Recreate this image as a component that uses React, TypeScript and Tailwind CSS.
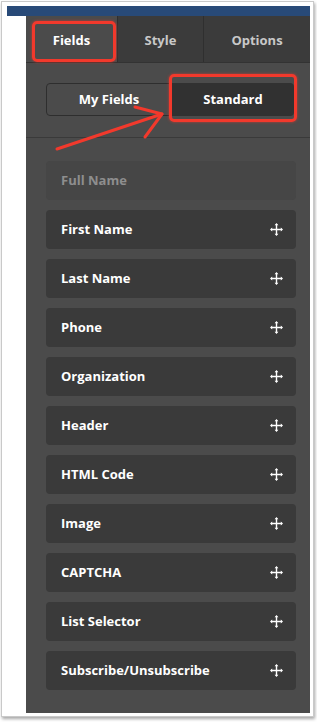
import React from "react";

const fields = [
  "First Name",
  "Last Name",
  "Phone",
  "Organization",
  "Header",
  "HTML Code",
  "Image",
  "CAPTCHA",
  "List Selector",
  "Subscribe/Unsubscribe",
];

function MoveIcon() {
  return (
    <svg width="13" height="13" viewBox="0 0 13 13" fill="none" className="text-white">
      <path d="M6.5 1v11M1 6.5h11" stroke="currentColor" strokeWidth="1.4" />
      <path d="M6.5 0L4.6 2.2h3.8zM6.5 13l-1.9-2.2h3.8zM0 6.5l2.2-1.9v3.8zM13 6.5l-2.2-1.9v3.8z" fill="currentColor" />
    </svg>
  );
}

export default function App() {
  return (
    <div className="w-[317px] h-[722px] bg-white" style={{ fontFamily: "'Open Sans', 'Liberation Sans', sans-serif" }}>
      <div className="relative ml-px mt-px w-[313px] h-[716px] border border-[#c9c9c9] bg-white shadow-[1px_2px_3px_rgba(0,0,0,0.35)] pt-[4px] pl-[5px]">
        <div className="h-[10px] w-[303px] bg-[#284a78]" />
        <div className="flex w-[303px]">
          <div className="w-[19px] shrink-0 bg-white" />
          <div className="w-[284px] shrink-0 h-[697px] bg-[#4b4b4b]">
            {/* tabs */}
            <div className="flex h-[47px] border-b border-[#333]">
              <div className="relative w-[91px] bg-[#4b4b4b] flex items-center justify-center pt-[3px] text-[13px] font-bold text-white">
                Fields
                <div className="absolute left-[6px] top-[5px] w-[84px] h-[41px] rounded-[5px] border-[3px] border-[#f2392c] shadow-[0_0_3px_rgba(242,57,44,0.7)]" />
              </div>
              <div className="w-[86px] bg-[#3b3b3b] border-l border-[#2f2f2f] flex items-center justify-center pt-[3px] text-[13px] font-bold text-[#c8c8c8]">
                Style
              </div>
              <div className="flex-1 bg-[#3b3b3b] border-l border-[#2f2f2f] flex items-center justify-center pt-[3px] text-[13px] font-bold text-[#c8c8c8]">
                Options
              </div>
            </div>

            {/* segmented control */}
            <div className="relative h-[75px] border-b border-[#3a3a3a] pl-[20px] pr-[16px] pt-[20px]">
              <div className="flex h-[33px]">
                <div className="w-[126px] rounded-l-[4px] border border-[#2e2e2e] flex items-center justify-center pt-px text-[13px] font-bold text-white">
                  My Fields
                </div>
                <div className="flex-1 rounded-r-[4px] bg-[#313131] flex items-center justify-center pt-px text-[13px] font-bold text-white">
                  Standard
                </div>
              </div>
              <div className="absolute left-[143px] top-[11px] w-[128px] h-[48px] rounded-[5px] border-[3px] border-[#f2392c] shadow-[0_0_3px_rgba(242,57,44,0.7)]" />
              <svg className="absolute left-0 top-0 overflow-visible" width="284" height="100">
                <g stroke="#f2392c" strokeWidth="3" strokeLinecap="round" strokeLinejoin="round" fill="none">
                  <path d="M31 86L136 51" />
                  <path d="M109 44L136 51L119 74" />
                </g>
              </svg>
            </div>

            {/* fields */}
            <div className="flex flex-col gap-[10px] pl-[20px] pr-[14px] pt-[23px]">
              <div className="h-[39px] rounded-[4px] bg-[#464646] flex items-center pl-[15px] text-[13px] font-bold text-[#8e8e8e]">
                Full Name
              </div>
              {fields.map((f) => (
                <div key={f} className="h-[39px] rounded-[4px] bg-[#3a3a3a] flex items-center justify-between pl-[15px] pr-[13px] text-[13px] font-bold text-white">
                  <span>{f}</span>
                  <MoveIcon />
                </div>
              ))}
            </div>
          </div>
        </div>
      </div>
    </div>
  );
}
